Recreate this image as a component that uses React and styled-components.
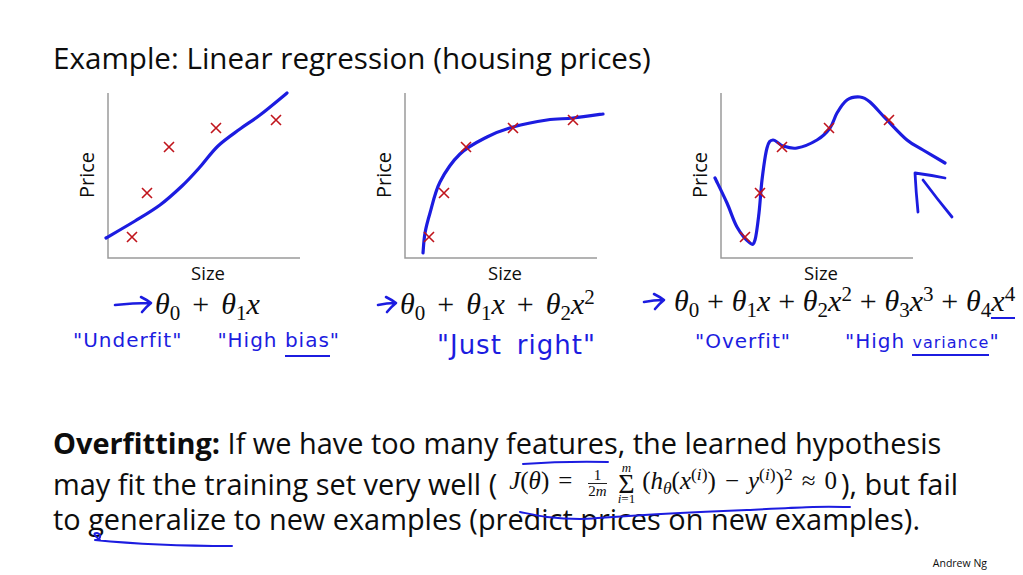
import React from 'react';
import styled, { createGlobalStyle } from 'styled-components';

const INK = '#1c1ce0';
const MARK = '#c0141c';

const GlobalStyle = createGlobalStyle`
  html, body { margin: 0; padding: 0; background: #fff; }
  body { font-family: "Open Sans", "Liberation Sans", sans-serif; color: #0d0d0d; }
`;

const Slide = styled.div`
  width: 1023px;
  height: 575px;
  box-sizing: border-box;
  padding-top: 40px;
  overflow: hidden;
  background: #fff;
  display: flex;
  flex-direction: column;
`;

const Title = styled.h1`
  margin: 0 0 0 53px;
  font-size: 29.6px;
  font-weight: 400;
  line-height: 36px;
`;

const Charts = styled.div`
  margin-top: 12px;
  height: 336px;
  padding-left: 60px;
  display: grid;
  grid-template-columns: 300px 280px 1fr;
`;

const Panel = styled.div`
  display: flex;
  flex-direction: column;
  align-items: flex-start;
`;

const PlotRow = styled.div`
  display: flex;
  align-items: center;
  gap: 3px;
  margin-left: ${p => p.$axis - 31}px;
  height: 175px;
`;

const AxisName = styled.span`
  writing-mode: vertical-rl;
  transform: rotate(180deg);
  font-size: 20px;
  line-height: 20px;
  width: 20px;
`;

const SizeName = styled.div`
  margin-left: ${p => p.$axis}px;
  width: 200px;
  text-align: center;
  font-size: 18.5px;
  line-height: 20px;
`;

const FormulaRow = styled.div`
  display: flex;
  align-items: center;
  gap: ${p => p.$gap}px;
  margin: ${p => p.$top}px 0 0 ${p => p.$indent}px;
`;

const Math = styled.span`
  font-family: "Liberation Serif", "Times New Roman", serif;
  font-size: 30px;
  line-height: 30px;
  white-space: nowrap;
  --op: ${p => p.$op || 0.3}em;
`;

const V = styled.i`
  font-style: italic;
`;

const Op = styled.span`
  margin: 0 var(--op, 0.3em);
`;

const Sub = styled.sub`
  font-size: 0.7em;
  vertical-align: -0.28em;
  line-height: 0;
`;

const Sup = styled.sup`
  font-size: 0.7em;
  vertical-align: 0.5em;
  line-height: 0;
`;

const Marked = styled.span`
  border-bottom: 2.5px solid ${INK};
`;

const Notes = styled.div`
  display: flex;
  align-items: baseline;
  gap: ${p => p.$gap}px;
  margin: ${p => p.$top}px 0 0 ${p => p.$indent}px;
  font-family: "DejaVu Sans", sans-serif;
  font-size: ${p => p.$size || 20}px;
  line-height: 24px;
  letter-spacing: 1px;
  color: ${INK};
  white-space: nowrap;
`;

const Small = styled.span`
  font-size: 16px;
  border-bottom: 2.5px solid ${INK};
  padding-bottom: 2px;
`;

const Underlined = styled.span`
  border-bottom: 2.5px solid ${INK};
  padding-bottom: 3px;
`;

const Body = styled.div`
  position: relative;
  padding-left: 53px;
  font-size: 28.9px;
`;

const Line = styled.div`
  height: 38px;
  line-height: 38px;
  white-space: nowrap;
`;

const Strong = styled.b`
  font-weight: 700;
`;

const InlineMath = styled.span`
  font-family: "Liberation Serif", "Times New Roman", serif;
  font-size: 25px;
  vertical-align: 6px;
  margin: 0 4px 0 12px;
  --op: 0.36em;
`;

const Frac = styled.span`
  display: inline-flex;
  flex-direction: column;
  align-items: center;
  vertical-align: middle;
  font-size: 15px;
  line-height: 14px;
  margin: 0 7px;
  & > span:first-child {
    border-bottom: 1px solid #222;
    padding: 0 2px 1px;
    align-self: stretch;
    text-align: center;
  }
`;

const Sum = styled.span`
  display: inline-flex;
  flex-direction: column;
  align-items: center;
  vertical-align: middle;
  line-height: 1;
  margin: 0 7px 0 4px;
`;

const Limit = styled.span`
  font-size: 13px;
  line-height: 10px;
`;

const Sigma = styled.span`
  font-size: 28px;
  line-height: 21px;
`;

const InkLayer = styled.svg`
  position: absolute;
  left: 0;
  top: 0;
  pointer-events: none;
  overflow: visible;
`;

const Credit = styled.div`
  margin-top: 18px;
  align-self: flex-end;
  padding-right: 36px;
  font-size: 10.5px;
  line-height: 14px;
`;

const smooth = pts => {
  let d = `M${pts[0][0]} ${pts[0][1]}`;
  for (let i = 0; i < pts.length - 1; i++) {
    const p0 = pts[i - 1] || pts[i];
    const p1 = pts[i];
    const p2 = pts[i + 1];
    const p3 = pts[i + 2] || p2;
    const c1 = [p1[0] + (p2[0] - p0[0]) / 6, p1[1] + (p2[1] - p0[1]) / 6];
    const c2 = [p2[0] - (p3[0] - p1[0]) / 6, p2[1] - (p3[1] - p1[1]) / 6];
    d += ` C${c1[0].toFixed(1)} ${c1[1].toFixed(1)} ${c2[0].toFixed(1)} ${c2[1].toFixed(1)} ${p2[0]} ${p2[1]}`;
  }
  return d;
};

const marks = [[32, 149], [47, 105], [69, 59], [116, 40], [176, 32]];

const underfit = [[6, 150], [35, 133], [60, 117], [82, 98], [100, 79], [118, 58], [140, 41], [160, 27], [187, 5]];
const justRight = [[26, 165], [28, 145], [33, 125], [43, 94], [63, 66], [90, 49], [116, 39], [150, 32], [176, 30], [206, 26]];
const overfit = [[2, 90], [14, 115], [24, 139], [37, 155], [42, 152], [46, 125], [49, 92], [54, 60], [60, 52], [70, 58], [84, 60], [104, 52], [117, 40], [124, 25], [134, 12], [147, 9], [157, 14], [174, 32], [194, 52], [210, 62], [232, 75]];

const Plot = ({ axis, curve, children }) => (
  <>
    <PlotRow $axis={axis}>
      <AxisName>Price</AxisName>
      <svg width="245" height="175" viewBox="0 0 245 175">
        <path d="M8 5 V170 H200" fill="none" stroke="#9a9a9a" strokeWidth="1.5" />
        <path d={smooth(curve)} fill="none" stroke={INK} strokeWidth="3.2" strokeLinecap="round" strokeLinejoin="round" />
        {marks.map(([x, y]) => (
          <path key={x} d={`M${x - 5} ${y - 5} L${x + 5} ${y + 5} M${x + 5} ${y - 5} L${x - 5} ${y + 5}`} stroke={MARK} strokeWidth="1.6" />
        ))}
        {children}
      </svg>
    </PlotRow>
    <SizeName $axis={axis}>Size</SizeName>
  </>
);

const Arrow = ({ w }) => (
  <svg width={w} height="22" viewBox={`0 0 ${w} 22`}>
    <path
      d={`M2 12 Q${w / 2} 10 ${w - 3} 10 M${w - 12} 4 Q${w - 6} 7 ${w - 2} 10 Q${w - 7} 14 ${w - 11} 19`}
      fill="none" stroke={INK} strokeWidth="2.6" strokeLinecap="round" strokeLinejoin="round"
    />
  </svg>
);

const Theta = ({ n }) => (
  <><V>θ</V><Sub>{n}</Sub></>
);

const App = () => (
  <Slide>
    <GlobalStyle />
    <Title>Example: Linear regression (housing prices)</Title>
    <Charts>
      <Panel>
        <Plot axis={48} curve={underfit} />
        <FormulaRow $indent={53} $top={6} $gap={2}>
          <Arrow w={40} />
          <Math $op={0.4}><Theta n="0" /><Op>+</Op><Theta n="1" /><V>x</V></Math>
        </FormulaRow>
        <Notes $indent={13} $top={9} $gap={35}>
          <span>"Underfit"</span>
          <span>"High <Underlined>bias</Underlined>"</span>
        </Notes>
      </Panel>
      <Panel>
        <Plot axis={45} curve={justRight} />
        <FormulaRow $indent={16} $top={6} $gap={2}>
          <Arrow w={22} />
          <Math $op={0.4}>
            <Theta n="0" /><Op>+</Op><Theta n="1" /><V>x</V><Op>+</Op><Theta n="2" /><V>x</V><Sup>2</Sup>
          </Math>
        </FormulaRow>
        <Notes $indent={77} $top={14} $gap={15} $size={26}>
          <span>"Just</span>
          <span>right"</span>
        </Notes>
      </Panel>
      <Panel>
        <Plot axis={81} curve={overfit}>
          <path d="M205 124 Q203 104 202 85 Q217 87 232 90 M210 92 Q225 112 239 129" fill="none" stroke={INK} strokeWidth="2.8" strokeLinecap="round" strokeLinejoin="round" />
        </Plot>
        <FormulaRow $indent={2} $top={3} $gap={8}>
          <Arrow w={24} />
          <Math $op={0.26}>
            <Theta n="0" /><Op>+</Op><Theta n="1" /><V>x</V><Op>+</Op><Theta n="2" /><V>x</V><Sup>2</Sup>
            <Op>+</Op><Theta n="3" /><V>x</V><Sup>3</Sup><Op>+</Op><Theta n="4" /><Marked><V>x</V><Sup>4</Sup></Marked>
          </Math>
        </FormulaRow>
        <Notes $indent={55} $top={13} $gap={54}>
          <span>"Overfit"</span>
          <span>"High <Small>variance</Small>"</span>
        </Notes>
      </Panel>
    </Charts>
    <Body>
      <Line><Strong>Overfitting:</Strong> If we have too many features, the learned hypothesis</Line>
      <Line>
        may fit the training set very well (
        <InlineMath>
          <V>J</V>(<V>θ</V>)<Op>=</Op>
          <Frac><span>1</span><span>2<V>m</V></span></Frac>
          <Sum><Limit><V>m</V></Limit><Sigma>Σ</Sigma><Limit><V>i</V>=1</Limit></Sum>
          (<V>h</V><Sub><V>θ</V></Sub>(<V>x</V><Sup>(<V>i</V>)</Sup>)<Op>−</Op><V>y</V><Sup>(<V>i</V>)</Sup>)<Sup>2</Sup>
          <Op>≈</Op>0
        </InlineMath>
        ), but fail
      </Line>
      <Line>to generalize to new examples (predict prices on new examples).</Line>
      <InkLayer width="1023" height="151" viewBox="0 0 1023 151">
        <g fill="none" stroke={INK} strokeWidth="2" strokeLinecap="round" strokeLinejoin="round">
          <path d="M523 40 Q565 37 608 38" />
          <path d={smooth([[520, 88], [547, 93], [580, 95], [613, 93], [680, 89], [747, 86], [813, 83], [850, 83]])} />
          <path d="M100 116 C95 112 92 109 97 109 C102 110 101 116 95 116 C125 119 175 122 232 122" />
        </g>
      </InkLayer>
    </Body>
    <Credit>Andrew Ng</Credit>
  </Slide>
);

export default App;
